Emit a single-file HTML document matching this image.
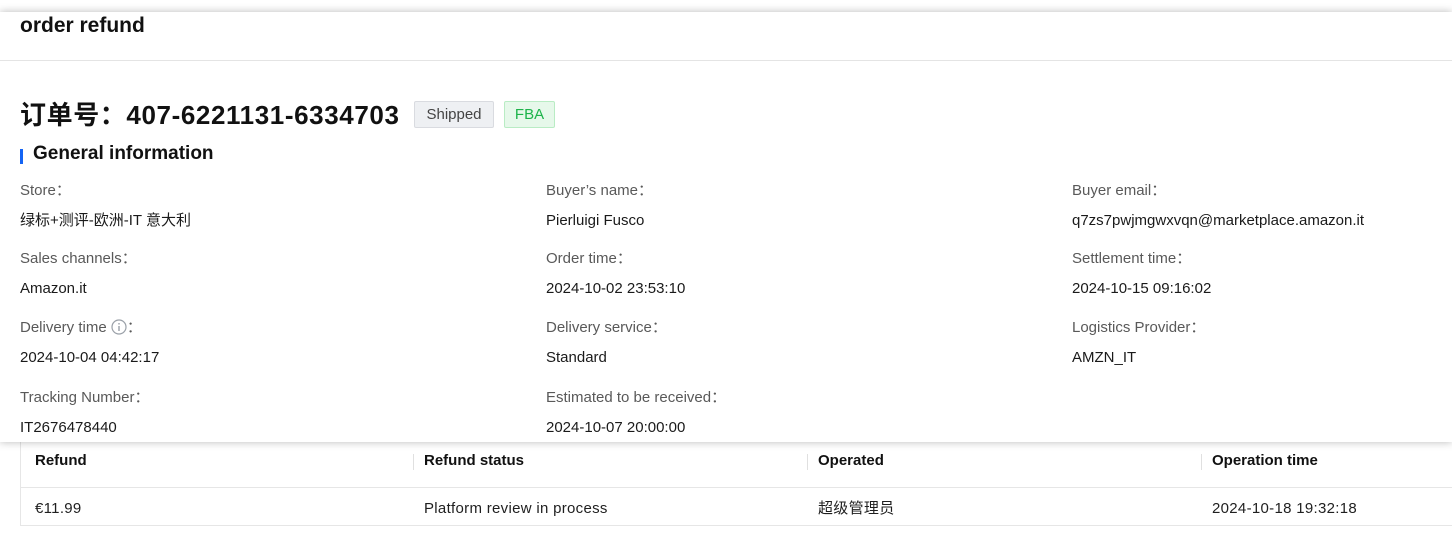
<!DOCTYPE html>
<html><head><meta charset="utf-8"><style>
*{margin:0;padding:0;box-sizing:border-box}
body{width:1452px;height:542px;overflow:hidden;background:#fff;font-family:"Liberation Sans","Noto Sans CJK SC",sans-serif;color:#1f1f1f;position:relative}
.table{position:absolute;left:20px;top:430px;width:1440px;border-left:1px solid #e6e6e6}
.hr{height:58px;border-bottom:1px solid #e6e6e6;position:relative}
.br{height:38px;border-bottom:1px solid #e6e6e6;position:relative}
.c{position:absolute;font-size:15px;line-height:18px}
.hr .c{top:22px;font-weight:bold;color:#111}
.br .c{top:12px;letter-spacing:.3px}
.sep{position:absolute;top:24px;width:1px;height:16px;background:#e0e0e0}
.panel{position:absolute;left:0;top:12px;width:1452px;height:430px;background:#fff;box-shadow:0 0 8px rgba(0,0,0,.28)}
.title{position:absolute;left:20px;top:2px;font-size:21px;font-weight:bold;color:#111;line-height:24px}
.line{position:absolute;left:0;top:48px;width:100%;height:1px;background:#e4e4e4}
.ono{position:absolute;left:20px;top:83px;font-size:26px;font-weight:bold;color:#111;letter-spacing:.6px}
.tag{position:absolute;top:89px;height:27px;font-size:15px;line-height:25px;text-align:center;border-radius:2px}
.sec{position:absolute;left:20px;top:131px;font-size:19px;font-weight:bold;color:#111;padding-left:13px}
.sec:before{content:"";position:absolute;left:0;top:6px;width:3px;height:15px;background:#1464f4}
.l{position:absolute;font-size:15px;color:#595959;line-height:18px}
.v{position:absolute;font-size:15px;color:#1a1a1a;line-height:18px}
</style></head><body>
<div class="table">
 <div class="hr">
  <div class="c" style="left:14px">Refund</div>
  <div class="sep" style="left:392px"></div><div class="c" style="left:403px">Refund status</div>
  <div class="sep" style="left:786px"></div><div class="c" style="left:797px">Operated</div>
  <div class="sep" style="left:1180px"></div><div class="c" style="left:1191px">Operation time</div>
 </div>
 <div class="br">
  <div class="c" style="left:14px">€11.99</div>
  <div class="c" style="left:403px">Platform review in process</div>
  <div class="c" style="left:797px">超级管理员</div>
  <div class="c" style="left:1191px">2024-10-18 19:32:18</div>
 </div>
</div>
<div class="panel">
 <div class="title">order refund</div>
 <div class="line"></div>
 <div class="ono">订单号：407-6221131-6334703</div>
 <div class="tag" style="left:414px;width:80px;background:#eef0f3;border:1px solid #d9dbe0;color:#444">Shipped</div>
 <div class="tag" style="left:504px;width:51px;background:#e6f8ea;border:1px solid #b9ecc4;color:#1db34a">FBA</div>
 <div class="sec">General information</div>

 <div class="l" style="left:20px;top:170px">Store：</div>
 <div class="v" style="left:20px;top:200px">绿标+测评-欧洲-IT 意大利</div>
 <div class="l" style="left:546px;top:170px">Buyer’s name：</div>
 <div class="v" style="left:546px;top:200px">Pierluigi Fusco</div>
 <div class="l" style="left:1072px;top:170px">Buyer email：</div>
 <div class="v" style="left:1072px;top:200px">q7zs7pwjmgwxvqn@marketplace.amazon.it</div>

 <div class="l" style="left:20px;top:238px">Sales channels：</div>
 <div class="v" style="left:20px;top:268px">Amazon.it</div>
 <div class="l" style="left:546px;top:238px">Order time：</div>
 <div class="v" style="left:546px;top:268px">2024-10-02 23:53:10</div>
 <div class="l" style="left:1072px;top:238px">Settlement time：</div>
 <div class="v" style="left:1072px;top:268px">2024-10-15 09:16:02</div>

 <div class="l" style="left:20px;top:307px">Delivery time <svg width="16" height="16" viewBox="0 0 16 16" style="vertical-align:-3px"><circle cx="8" cy="8" r="7" fill="none" stroke="#9aa0a8" stroke-width="1.2"/><rect x="7.3" y="7" width="1.4" height="5" fill="#9aa0a8"/><rect x="7.3" y="4" width="1.4" height="1.5" fill="#9aa0a8"/></svg>：</div>
 <div class="v" style="left:20px;top:337px">2024-10-04 04:42:17</div>
 <div class="l" style="left:546px;top:307px">Delivery service：</div>
 <div class="v" style="left:546px;top:337px">Standard</div>
 <div class="l" style="left:1072px;top:307px">Logistics Provider：</div>
 <div class="v" style="left:1072px;top:337px">AMZN_IT</div>

 <div class="l" style="left:20px;top:377px">Tracking Number：</div>
 <div class="v" style="left:20px;top:407px">IT2676478440</div>
 <div class="l" style="left:546px;top:377px">Estimated to be received：</div>
 <div class="v" style="left:546px;top:407px">2024-10-07 20:00:00</div>
</div>
</body></html>
